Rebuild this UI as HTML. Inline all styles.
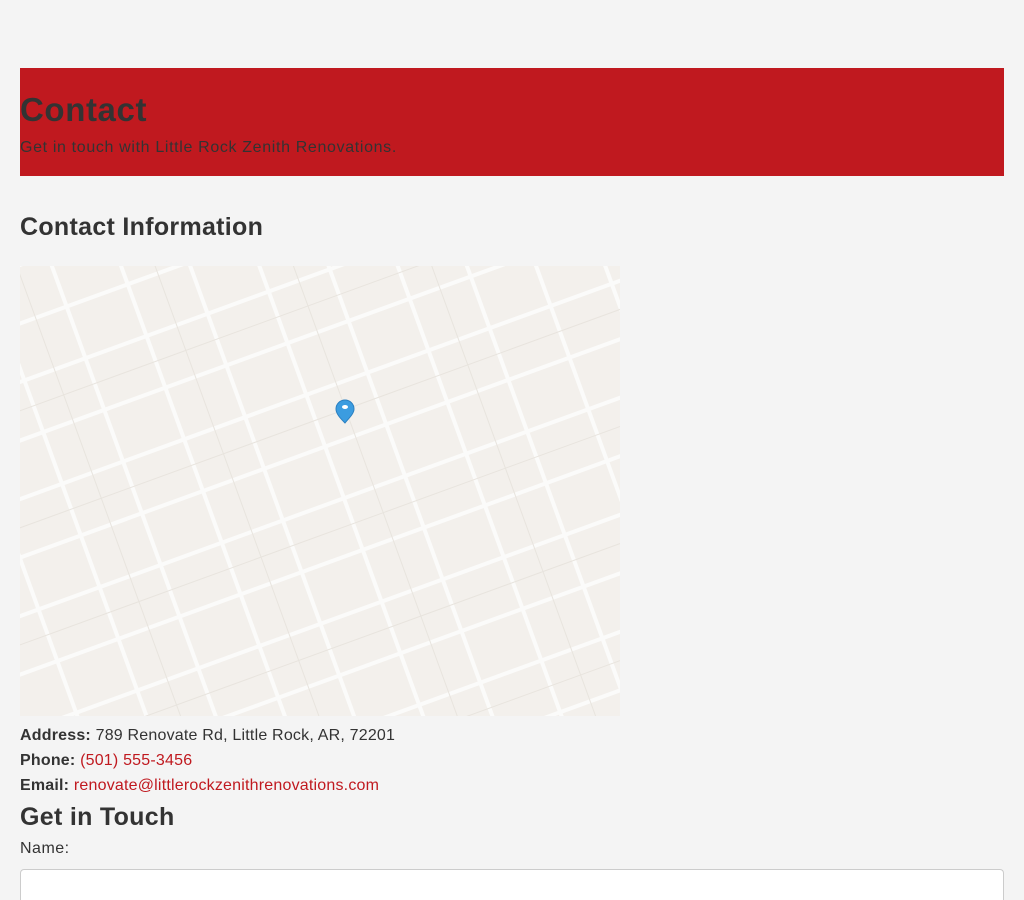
<!DOCTYPE html>
<html><head><meta charset="utf-8"><style>
*{box-sizing:border-box}
html,body{margin:0;height:900px;overflow:hidden}
body{background:#f4f4f4;font-family:"Liberation Sans",sans-serif;color:#333;width:1024px;position:relative}
.banner{position:absolute;left:20px;top:68px;width:984px;height:108px;background:#c0191f}
h1{position:absolute;left:20px;top:91px;margin:0;font-size:33px;font-weight:bold;color:#333;letter-spacing:0.6px}
.sub{position:absolute;left:20px;top:139px;font-size:16px;color:#333;letter-spacing:0.65px}
h2{position:absolute;left:20px;margin:0;font-size:25px;font-weight:bold;color:#333;letter-spacing:0.3px}
.map{position:absolute;left:20px;top:266px;width:600px;height:450px}
.info{position:absolute;left:20px;top:723px;font-size:16px;line-height:25px;letter-spacing:0.2px}
.info a{color:#c0191f;text-decoration:none}
.lbl{position:absolute;left:20px;top:840px;font-size:16px;letter-spacing:0.5px}
.inp{position:absolute;left:20px;top:869px;width:984px;height:31px;background:#fff;border:1px solid #ccc;border-bottom:none;border-radius:4px 4px 0 0}
</style></head><body>
<div class="banner"></div>
<h1>Contact</h1>
<div class="sub">Get in touch with Little Rock Zenith Renovations.</div>
<h2 style="top:213px">Contact Information</h2>
<svg class="map" viewBox="0 0 600 450" xmlns="http://www.w3.org/2000/svg">
<rect width="600" height="450" fill="#f3f0ec"/>
<g transform="rotate(-20 300 225)" fill="none">
<g stroke="#fbfbfa" stroke-width="4">
<line x1="-400" y1="-200" x2="1000" y2="-200"/><line x1="-400" y1="-145" x2="1000" y2="-145"/>
<line x1="-400" y1="-90" x2="1000" y2="-90"/><line x1="-400" y1="-35" x2="1000" y2="-35"/>
<line x1="-400" y1="20" x2="1000" y2="20"/><line x1="-400" y1="75" x2="1000" y2="75"/>
<line x1="-400" y1="130" x2="1000" y2="130"/><line x1="-400" y1="185" x2="1000" y2="185"/>
<line x1="-400" y1="240" x2="1000" y2="240"/><line x1="-400" y1="295" x2="1000" y2="295"/>
<line x1="-400" y1="350" x2="1000" y2="350"/><line x1="-400" y1="405" x2="1000" y2="405"/>
<line x1="-400" y1="460" x2="1000" y2="460"/><line x1="-400" y1="515" x2="1000" y2="515"/>
<line x1="-400" y1="570" x2="1000" y2="570"/><line x1="-400" y1="625" x2="1000" y2="625"/>
</g>
<g stroke="#fbfbfa" stroke-width="4">
<line x1="-200" y1="-400" x2="-200" y2="900"/><line x1="-135" y1="-400" x2="-135" y2="900"/>
<line x1="-70" y1="-400" x2="-70" y2="900"/><line x1="-5" y1="-400" x2="-5" y2="900"/>
<line x1="60" y1="-400" x2="60" y2="900"/><line x1="125" y1="-400" x2="125" y2="900"/>
<line x1="190" y1="-400" x2="190" y2="900"/><line x1="255" y1="-400" x2="255" y2="900"/>
<line x1="320" y1="-400" x2="320" y2="900"/><line x1="385" y1="-400" x2="385" y2="900"/>
<line x1="450" y1="-400" x2="450" y2="900"/><line x1="515" y1="-400" x2="515" y2="900"/>
<line x1="580" y1="-400" x2="580" y2="900"/><line x1="645" y1="-400" x2="645" y2="900"/>
<line x1="710" y1="-400" x2="710" y2="900"/><line x1="775" y1="-400" x2="775" y2="900"/>
</g>
<g stroke="#e8e4de" stroke-width="1">
<line x1="-400" y1="47" x2="1000" y2="47"/><line x1="-400" y1="157" x2="1000" y2="157"/>
<line x1="-400" y1="267" x2="1000" y2="267"/><line x1="-400" y1="377" x2="1000" y2="377"/>
<line x1="-400" y1="487" x2="1000" y2="487"/>
<line x1="92" y1="-400" x2="92" y2="900"/><line x1="222" y1="-400" x2="222" y2="900"/>
<line x1="352" y1="-400" x2="352" y2="900"/><line x1="482" y1="-400" x2="482" y2="900"/>
</g>
</g>
<path d="M325 134c-5 0-9 4-9 9 0 5 5 10 9 14 3-4 9-9 9-14 0-5-4-9-9-9z" fill="#3b9ce0" stroke="#2a7fc0"/>
<ellipse cx="325" cy="141" rx="3" ry="2" fill="#fff"/>
</svg>
<div class="info"><b>Address:</b> 789 Renovate Rd, Little Rock, AR, 72201<br><b>Phone:</b> <a>(501) 555-3456</a><br><b>Email:</b> <a>renovate@littlerockzenithrenovations.com</a></div>
<h2 style="top:803px">Get in Touch</h2>
<div class="lbl">Name:</div>
<div class="inp"></div>
</body></html>
